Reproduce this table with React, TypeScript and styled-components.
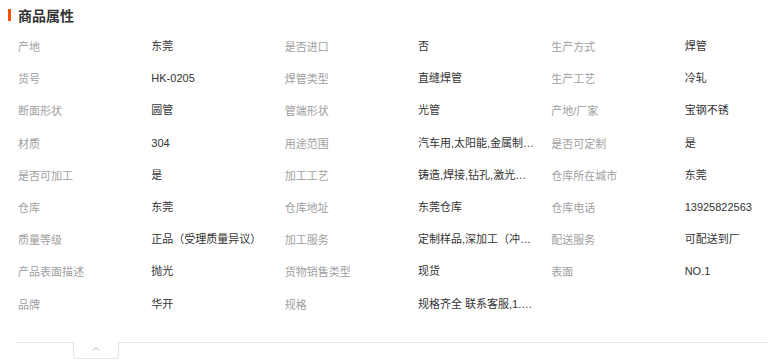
import React from 'react';
import styled, { createGlobalStyle } from 'styled-components';

const GlobalStyle = createGlobalStyle`
    body {
        margin: 0;
        background: #fff;
        font-family: "Liberation Sans", "Noto Sans CJK SC", sans-serif;
        overflow: hidden;
    }
`

type Attr = { label: string, value: string }

const attrs: Attr[] = [
    { label: '产地', value: '东莞' },
    { label: '是否进口', value: '否' },
    { label: '生产方式', value: '焊管' },
    { label: '货号', value: 'HK-0205' },
    { label: '焊管类型', value: '直缝焊管' },
    { label: '生产工艺', value: '冷轧' },
    { label: '断面形状', value: '圆管' },
    { label: '管端形状', value: '光管' },
    { label: '产地/厂家', value: '宝钢不锈' },
    { label: '材质', value: '304' },
    { label: '用途范围', value: '汽车用,太阳能,金属制品,装饰,建筑' },
    { label: '是否可定制', value: '是' },
    { label: '是否可加工', value: '是' },
    { label: '加工工艺', value: '铸造,焊接,钻孔,激光切割' },
    { label: '仓库所在城市', value: '东莞' },
    { label: '仓库', value: '东莞' },
    { label: '仓库地址', value: '东莞仓库' },
    { label: '仓库电话', value: '13925822563' },
    { label: '质量等级', value: '正品（受理质量异议）' },
    { label: '加工服务', value: '定制样品,深加工（冲压,折弯）' },
    { label: '配送服务', value: '可配送到厂' },
    { label: '产品表面描述', value: '抛光' },
    { label: '货物销售类型', value: '现货' },
    { label: '表面', value: 'NO.1' },
    { label: '品牌', value: '华开' },
    { label: '规格', value: '规格齐全 联系客服,1.0*20' },
]

const Panel = styled.section`
    width: 768px;
`

const TitleBar = styled.h3`
    display: flex;
    align-items: center;
    gap: 7px;
    height: 30px;
    margin: 0;
    padding: 0 0 0 8px;
    box-sizing: border-box;
    font-size: 14px;
    font-weight: bold;
    color: #333;

    &::before {
        content: '';
        width: 3px;
        height: 12px;
        background: #ff5000;
    }
`

const Grid = styled.dl`
    display: grid;
    grid-template-columns: repeat(5, 133.33px) 1fr;
    grid-auto-rows: 32.2px;
    margin: 0;
    padding-left: 18px;
    font-size: 11px;
`

const Label = styled.dt`
    display: flex;
    align-items: center;
    color: #a0a0a0;
`

const Value = styled.dd`
    margin: 0;
    line-height: 32px;
    color: #333;
    max-width: 117px;
    white-space: nowrap;
    overflow: hidden;
    text-overflow: ellipsis;
`

const Footer = styled.div`
    display: flex;
    margin: 22px 0 0 17px;
    border-top: 1px solid #e5e5e5;
`

const Toggle = styled.button`
    display: flex;
    justify-content: center;
    margin: -1px 0 0 56px;
    padding: 4px 0 0;
    width: 46px;
    height: 17px;
    box-sizing: border-box;
    background: #fff;
    border: 1px solid #e5e5e5;
    border-top: none;
    border-radius: 0 0 4px 4px;
    cursor: pointer;
`

const App: React.FC = () => {
    return (
        <Panel>
            <GlobalStyle />
            <TitleBar>商品属性</TitleBar>
            <Grid>
                {attrs.map(a => (
                    <React.Fragment key={a.label}>
                        <Label>{a.label}</Label>
                        <Value>{a.value}</Value>
                    </React.Fragment>
                ))}
            </Grid>
            <Footer>
                <Toggle aria-label="收起">
                    <svg width="8" height="5" viewBox="0 0 8 5">
                        <path d="M1 4.5 L4 1.5 L7 4.5" fill="none" stroke="#aaa" strokeWidth="1" />
                    </svg>
                </Toggle>
            </Footer>
        </Panel>
    )
}

export default App;
